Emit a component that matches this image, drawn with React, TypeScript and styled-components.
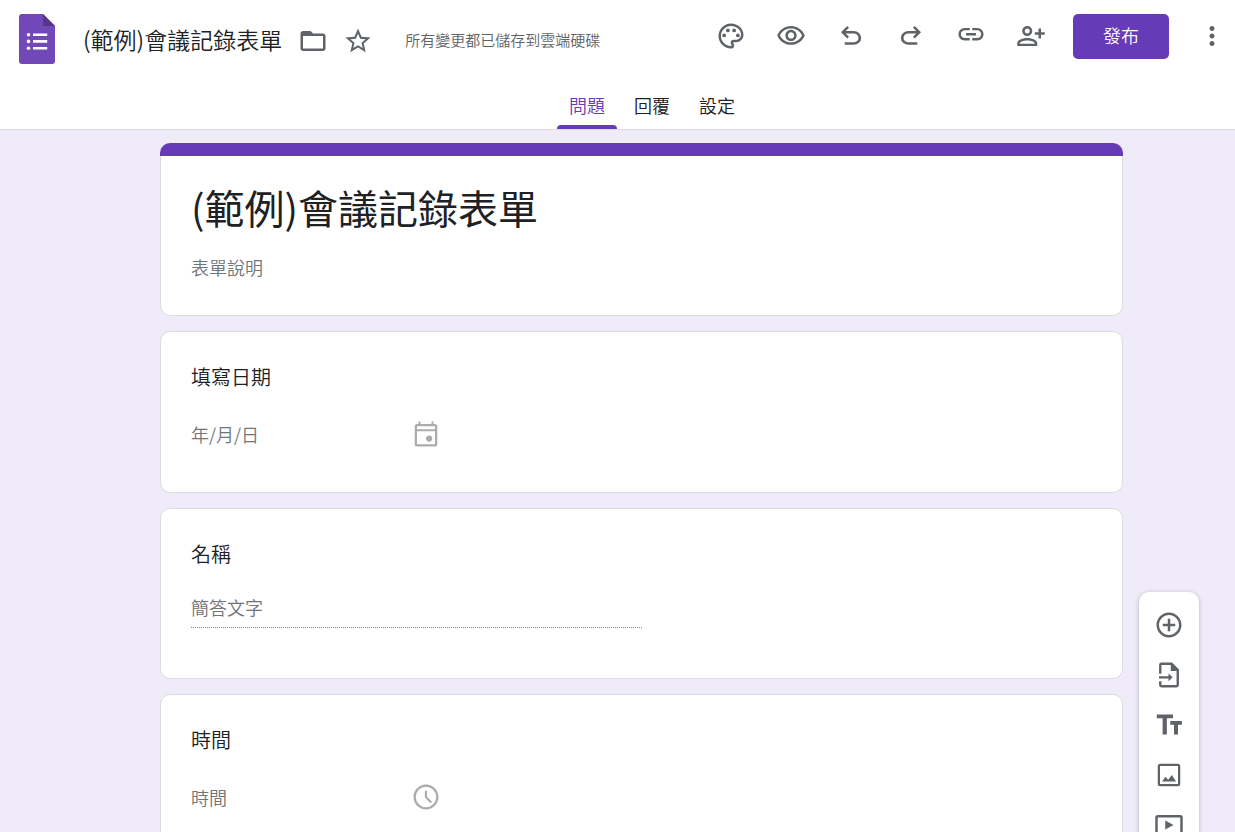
import React from 'react';
import styled, { createGlobalStyle } from 'styled-components';

const purple = '#673ab7';
const ink = '#202124';
const grey = '#5f6368';
const hint = '#70757a';
const line = '#dadce0';

const GlobalStyle = createGlobalStyle`
  *, *::before, *::after { box-sizing: border-box; }
  body {
    margin: 0;
    background: #f0ebf8;
    color: ${ink};
    font-family: "Noto Sans CJK TC", "Noto Sans", sans-serif;
    font-weight: 350;
  }
  button, input { font: inherit; }
`;

const Page = styled.div`
  display: flex;
  flex-direction: column;
  height: 100vh;
  overflow: hidden;
`;

const Header = styled.header`
  flex: none;
  background: #fff;
  border-bottom: 1px solid ${line};
  padding-top: 14px;
`;

const TopRow = styled.div`
  display: flex;
  align-items: flex-start;
  justify-content: space-between;
  padding: 0 8px 0 19px;
`;

const DocumentInfo = styled.div`
  display: flex;
  align-items: center;
  height: 54px;
`;

const HomeLink = styled.a`
  display: block;
  height: 54px;
  margin-right: 28px;
`;

const DocumentName = styled.span`
  margin-right: 8px;
  padding-bottom: 4px;
  font-size: 23px;
  line-height: 32px;
  white-space: nowrap;
`;

const SaveStatus = styled.span`
  margin-left: 25px;
  padding-bottom: 2px;
  color: ${grey};
  font-size: 15px;
  line-height: 20px;
  white-space: nowrap;
`;

const Actions = styled.div`
  display: flex;
  align-items: flex-start;
  height: 45px;
`;

const IconButton = styled.button<{ $width: number }>`
  display: flex;
  align-items: center;
  justify-content: center;
  width: ${(p) => p.$width}px;
  height: 44px;
  padding: 0;
  border: 0;
  background: transparent;
  color: ${grey};
  cursor: pointer;
`;

const PublishButton = styled.button`
  width: 96px;
  height: 45px;
  margin: 0 28px 0 12px;
  padding: 0 0 4px;
  border: 0;
  border-radius: 5px;
  background: ${purple};
  color: #fff;
  font-size: 18px;
  line-height: 24px;
  cursor: pointer;
`;

const Tabs = styled.nav`
  display: flex;
  justify-content: center;
  gap: 5px;
  padding: 15px 0 0 69px;
`;

const Tab = styled.button<{ $active?: boolean }>`
  position: relative;
  width: 60px;
  height: 46px;
  padding: 0 0 2px;
  border: 0;
  background: transparent;
  color: ${(p) => (p.$active ? purple : ink)};
  font-size: 18px;
  line-height: 24px;
  cursor: pointer;

  &::after {
    content: "";
    display: ${(p) => (p.$active ? 'block' : 'none')};
    position: absolute;
    left: 0;
    right: 0;
    bottom: 0;
    height: 4px;
    border-radius: 4px 4px 0 0;
    background: ${purple};
  }
`;

const Workspace = styled.main`
  flex: 1;
  min-height: 0;
  display: flex;
  align-items: flex-start;
  gap: 16px;
  padding: 13px 36px 0 160px;
  overflow: hidden;
`;

const FormColumn = styled.div`
  flex: 1;
  min-width: 0;
  display: flex;
  flex-direction: column;
  gap: 15px;
`;

const Card = styled.section`
  padding: 30px 30px 43px;
  border: 1px solid ${line};
  border-radius: 10px;
  background: #fff;
`;

const TitleCard = styled(Card)`
  padding: 0 0 33px;
  border-top: 0;
`;

const AccentBar = styled.div`
  height: 13px;
  margin: 0 -1px;
  border-radius: 10px 10px 0 0;
  background: ${purple};
`;

const TitleBody = styled.div`
  display: flex;
  flex-direction: column;
  gap: 18px;
  padding: 24px 30px 0;
`;

const FormTitle = styled.h1`
  margin: 0;
  font-size: 40px;
  font-weight: 400;
  line-height: 54px;
`;

const QuestionTitle = styled.h2`
  margin: 0;
  font-size: 20px;
  font-weight: 350;
  line-height: 30px;
`;

const AnswerRow = styled.div`
  display: flex;
  align-items: center;
  width: 250px;
  margin-top: 27px;
  color: #a9abad;
`;

const TextField = styled.input`
  display: block;
  flex: 1;
  width: 100%;
  min-width: 0;
  height: 30px;
  padding: 0;
  border: 0;
  outline: 0;
  background: transparent;
  color: ${ink};
  font-size: 18px;
  line-height: 30px;

  &::placeholder { color: ${hint}; opacity: 1; }
`;

const ShortAnswer = styled(TextField)`
  width: 50%;
  height: 36px;
  margin: 23px 0 7px;
  padding-bottom: 5px;
  border-bottom: 1px dotted #80868b;
`;

const ToolRail = styled.aside`
  flex: none;
  display: flex;
  flex-direction: column;
  width: 60px;
  margin-top: 449px;
  padding: 8px 0;
  border-radius: 10px;
  background: #fff;
  box-shadow: 0 1px 4px rgba(60, 64, 67, 0.35);
`;

const RailButton = styled(IconButton)`
  height: 50px;
`;

type IconProps = { size?: number; children: React.ReactNode };

const Icon = ({ size = 30, children }: IconProps) => (
  <svg width={size} height={size} viewBox="0 0 24 24" fill="currentColor" fillRule="evenodd" aria-hidden="true">
    {children}
  </svg>
);

const SymbolIcon = ({ d }: { d: string }) => (
  <svg width="30" height="30" viewBox="0 -960 960 960" fill="currentColor" aria-hidden="true">
    <path d={d} />
  </svg>
);

const FormsLogo = () => (
  <svg width="36" height="50" viewBox="0 0 36 50" aria-hidden="true">
    <path d="M3 0h21l12 12v35a3 3 0 0 1-3 3H3a3 3 0 0 1-3-3V3a3 3 0 0 1 3-3z" fill="#7248b9" />
    <path d="M24 0l12 12H24z" fill="#56368a" />
    <g fill="#fff">
      <circle cx="9.5" cy="20.7" r="1.8" />
      <circle cx="9.5" cy="27.4" r="1.8" />
      <circle cx="9.5" cy="34.3" r="1.8" />
      <path d="M14 19.4h14.2V22H14zM14 26.1h14.2v2.6H14zM14 33h14.2v2.6H14z" />
    </g>
  </svg>
);

const paths = {
  folder:
    'M20 6h-8l-2-2H4c-1.1 0-1.99.9-1.99 2L2 18c0 1.1.9 2 2 2h16c1.1 0 2-.9 2-2V8c0-1.1-.9-2-2-2zm0 12H4V8h16v10z',
  star:
    'M22 9.24l-7.19-.62L12 2 9.19 8.63 2 9.24l5.46 4.73L5.82 21 12 17.27 18.18 21l-1.63-7.03L22 9.24zM12 15.4l-3.76 2.27 1-4.28-3.32-2.88 4.38-.38L12 6.1l1.71 4.04 4.38.38-3.32 2.88 1 4.28L12 15.4z',
  palette:
    'M12 22C6.49 22 2 17.51 2 12S6.49 2 12 2s10 4.04 10 9c0 3.31-2.69 6-6 6h-1.77c-.28 0-.5.22-.5.5 0 .12.05.23.13.33.41.47.64 1.06.64 1.67A2.5 2.5 0 0 1 12 22zm0-18c-4.41 0-8 3.59-8 8s3.59 8 8 8c.28 0 .5-.22.5-.5a.54.54 0 0 0-.14-.35c-.41-.46-.63-1.05-.63-1.65a2.5 2.5 0 0 1 2.5-2.5H16c2.21 0 4-1.79 4-4 0-3.86-3.59-7-8-7z',
  eye:
    'M12 6c3.79 0 7.17 2.13 8.82 5.5C19.17 14.87 15.79 17 12 17s-7.17-2.13-8.82-5.5C4.83 8.13 8.21 6 12 6m0-2C7 4 2.73 7.11 1 11.5 2.73 15.89 7 19 12 19s9.27-3.11 11-7.5C21.27 7.11 17 4 12 4zm0 5c1.38 0 2.5 1.12 2.5 2.5S13.38 14 12 14s-2.5-1.12-2.5-2.5S10.62 9 12 9m0-2c-2.48 0-4.5 2.02-4.5 4.5S9.52 16 12 16s4.5-2.02 4.5-4.5S14.48 7 12 7z',
  link:
    'M3.9 10.5c0-1.71 1.39-3.1 3.1-3.1h4V5.5H7c-2.76 0-5 2.24-5 5s2.24 5 5 5h4v-1.9H7c-1.71 0-3.1-1.39-3.1-3.1zM8 11.5h8v-2H8v2zm9-6h-4v1.9h4c1.71 0 3.1 1.39 3.1 3.1s-1.39 3.1-3.1 3.1h-4v1.9h4c2.76 0 5-2.24 5-5s-2.24-5-5-5z',
  personAdd:
    'M20 9V6h-2v3h-3v2h3v3h2v-3h3V9h-3zM9 12c2.21 0 4-1.79 4-4s-1.79-4-4-4-4 1.79-4 4 1.79 4 4 4zm0-6c1.1 0 2 .9 2 2s-.9 2-2 2-2-.9-2-2 .9-2 2-2zM9 13.6c-2.9 0-8 1.1-8 4.2V20h16v-2.2c0-3.1-5.1-4.2-8-4.2zM15 18.1H3v-.3c0-1.3 3.2-2.3 6-2.3s6 1 6 2.3z',
  more:
    'M12 8c1.1 0 2-.9 2-2s-.9-2-2-2-2 .9-2 2 .9 2 2 2zm0 2c-1.1 0-2 .9-2 2s.9 2 2 2 2-.9 2-2-.9-2-2-2zm0 6c-1.1 0-2 .9-2 2s.9 2 2 2 2-.9 2-2-.9-2-2-2z',
  calendar:
    'M19 4h-1V2h-1.6v2H7.6V2H6v2H5a2 2 0 0 0-2 2v14a2 2 0 0 0 2 2h14a2 2 0 0 0 2-2V6a2 2 0 0 0-2-2zM4.8 5.8h14.4v2.3H4.8zM4.8 9.8h14.4v10.4H4.8z',
  clock:
    'M11.99 2C6.47 2 2 6.48 2 12s4.47 10 9.99 10C17.52 22 22 17.52 22 12S17.52 2 11.99 2zM12 20.2a8.2 8.2 0 1 1 0-16.4 8.2 8.2 0 0 1 0 16.4zM11.1 7h1.7v4.8l4 4-1.2 1.2-4.5-4.6z',
  addCircle:
    'M13 7h-2v4H7v2h4v4h2v-4h4v-2h-4V7zm-1-5C6.48 2 2 6.48 2 12s4.48 10 10 10 10-4.48 10-10S17.52 2 12 2zm0 18c-4.41 0-8-3.59-8-8s3.59-8 8-8 8 3.59 8 8-3.59 8-8 8z',
  textFields: 'M2.2 3.6h13v3h-4.9v12.9H6.9V6.6H2.2zM13 8.8h9.3v3h-3.1v7.7H16v-7.7h-3z',
  image:
    'M19 3H5a2 2 0 0 0-2 2v14a2 2 0 0 0 2 2h14a2 2 0 0 0 2-2V5a2 2 0 0 0-2-2zM4.8 4.8h14.4v14.4H4.8zM6.4 17.2l2.8-3.8 2.1 2.3 3-3.8 3.3 5.3z',
  video:
    'M21 4H3a2 2 0 0 0-2 2v12a2 2 0 0 0 2 2h18a2 2 0 0 0 2-2V6a2 2 0 0 0-2-2zM3 6h18v12H3zM9 8.4l6.6 3.6L9 15.6z',
  section:
    'M19 4H5c-1.1 0-2 .9-2 2v3c0 1.1.9 2 2 2h14c1.1 0 2-.9 2-2V6c0-1.1-.9-2-2-2zm0 5H5V6h14v3zM19 13H5c-1.1 0-2 .9-2 2v3c0 1.1.9 2 2 2h14c1.1 0 2-.9 2-2v-3c0-1.1-.9-2-2-2zm0 5H5v-3h14v3z',
};

const undoPath =
  'M280-200v-80h284q63 0 109.5-40T720-420q0-60-46.5-100T564-560H312l104 104-56 56-200-200 200-200 56 56-104 104h252q97 0 169.5 63T806-420q0 94-72.5 157T564-200H280Z';
const redoPath =
  'M396-200q-97 0-169.5-63T154-420q0-94 72.5-157T396-640h252L544-744l56-56 200 200-200 200-56-56 104-104H396q-63 0-109.5 40T240-420q0 60 46.5 100T396-280h284v80H396Z';

const headerTools = [
  {
    label: '自訂主題',
    icon: (
      <Icon>
        <path d={paths.palette} />
        <circle cx="6.5" cy="11.5" r="1.5" />
        <circle cx="9.5" cy="7.5" r="1.5" />
        <circle cx="14.5" cy="7.5" r="1.5" />
        <circle cx="17.5" cy="11.5" r="1.5" />
      </Icon>
    ),
  },
  { label: '預覽', icon: <Icon><path d={paths.eye} /></Icon> },
  { label: '復原', icon: <SymbolIcon d={undoPath} /> },
  { label: '重做', icon: <SymbolIcon d={redoPath} /> },
  { label: '複製連結', icon: <Icon><path d={paths.link} /></Icon> },
  { label: '共用', icon: <Icon><path d={paths.personAdd} /></Icon> },
];

const railTools = [
  { label: '新增問題', icon: <Icon><path d={paths.addCircle} /></Icon> },
  {
    label: '匯入問題',
    icon: (
      <Icon>
        <path
          d="M5 11V4a1 1 0 0 1 1-1h8l5 5v12a1 1 0 0 1-1 1H6a1 1 0 0 1-1-1v-3"
          fill="none"
          stroke="currentColor"
          strokeWidth="1.9"
        />
        <path d="M13.4 2.4h1l5.4 5.4v1h-6.4zM4 12.9h7.6v-2.2l3.3 3.1-3.3 3.1v-2.2H4z" />
      </Icon>
    ),
  },
  { label: '新增標題與說明', icon: <Icon><path d={paths.textFields} /></Icon> },
  { label: '新增圖片', icon: <Icon><path d={paths.image} /></Icon> },
  { label: '新增影片', icon: <Icon><path d={paths.video} /></Icon> },
  { label: '新增區段', icon: <Icon><path d={paths.section} /></Icon> },
];

export default function App() {
  return (
    <>
      <GlobalStyle />
      <Page>
        <Header>
          <TopRow>
            <DocumentInfo>
              <HomeLink href="#" aria-label="表單首頁"><FormsLogo /></HomeLink>
              <DocumentName>(範例)會議記錄表單</DocumentName>
              <IconButton $width={45} aria-label="移動"><Icon><path d={paths.folder} /></Icon></IconButton>
              <IconButton $width={45} aria-label="加上星號"><Icon><path d={paths.star} /></Icon></IconButton>
              <SaveStatus>所有變更都已儲存到雲端硬碟</SaveStatus>
            </DocumentInfo>
            <Actions>
              {headerTools.map((tool) => (
                <IconButton key={tool.label} $width={60} aria-label={tool.label}>{tool.icon}</IconButton>
              ))}
              <PublishButton>發布</PublishButton>
              <IconButton $width={30} aria-label="更多"><Icon><path d={paths.more} /></Icon></IconButton>
            </Actions>
          </TopRow>
          <Tabs>
            <Tab $active>問題</Tab>
            <Tab>回覆</Tab>
            <Tab>設定</Tab>
          </Tabs>
        </Header>
        <Workspace>
          <FormColumn>
            <TitleCard>
              <AccentBar />
              <TitleBody>
                <FormTitle>(範例)會議記錄表單</FormTitle>
                <TextField placeholder="表單說明" aria-label="表單說明" />
              </TitleBody>
            </TitleCard>
            <Card>
              <QuestionTitle id="q-date">填寫日期</QuestionTitle>
              <AnswerRow>
                <TextField placeholder="年/月/日" aria-labelledby="q-date" />
                <Icon>
                  <path d={paths.calendar} />
                  <circle cx="14.5" cy="15.6" r="2.5" />
                </Icon>
              </AnswerRow>
            </Card>
            <Card>
              <QuestionTitle id="q-name">名稱</QuestionTitle>
              <ShortAnswer placeholder="簡答文字" aria-labelledby="q-name" />
            </Card>
            <Card>
              <QuestionTitle id="q-time">時間</QuestionTitle>
              <AnswerRow>
                <TextField placeholder="時間" aria-labelledby="q-time" />
                <Icon><path d={paths.clock} /></Icon>
              </AnswerRow>
            </Card>
          </FormColumn>
          <ToolRail>
            {railTools.map((tool) => (
              <RailButton key={tool.label} $width={60} aria-label={tool.label}>{tool.icon}</RailButton>
            ))}
          </ToolRail>
        </Workspace>
      </Page>
    </>
  );
}
